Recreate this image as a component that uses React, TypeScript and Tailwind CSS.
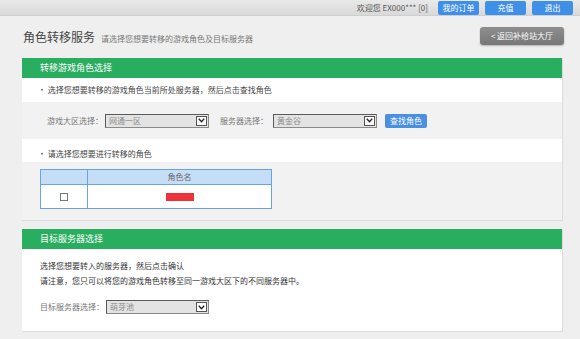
import React from "react";

const FONT = { fontFamily: '"Noto Sans CJK SC", "Noto Sans", sans-serif' };

const FakeSelect = ({ value, width }: { value: string; width: string }) => (
  <div className={`${width} h-[14px] flex items-stretch border border-[#8a8a8a] border-t-[#5a5a5a] border-l-[#5a5a5a] bg-[#e3e3e3]`}>
    <div className="flex-1 pl-[3px] text-[8px] leading-[12px] text-[#8c8c8c]">{value}</div>
    <div className="w-[11px] my-[1px] mr-[1px] bg-white border border-[#555] flex items-center justify-center">
      <svg width="7" height="5" viewBox="0 0 7 5">
        <path d="M0.8 0.8 L3.5 3.8 L6.2 0.8" fill="none" stroke="#222" strokeWidth="1.3" />
      </svg>
    </div>
  </div>
);

export default function App() {
  return (
    <div style={FONT} className="w-[580px] h-[339px] overflow-hidden bg-[#efefef]">
      {/* top bar */}
      <div className="h-[16px] bg-gradient-to-b from-[#e9e9e9] to-[#d9d9d9] border-b border-[#cfcfcf] flex items-start justify-end pr-[7px]">
        <span className="text-[8px] leading-[15px] text-[#555] mr-[10px]">欢迎您 EX000*** [0]</span>
        <div className="flex gap-[6px]">
          <button className="w-[41px] h-[14px] mt-[1px] rounded-[2px] bg-[#3f8fe8] text-white text-[8px] leading-[14px]">我的订单</button>
          <button className="w-[41px] h-[14px] mt-[1px] rounded-[2px] bg-[#3f8fe8] text-white text-[8px] leading-[14px]">充值</button>
          <button className="w-[41px] h-[14px] mt-[1px] rounded-[2px] bg-[#3f8fe8] text-white text-[8px] leading-[14px]">退出</button>
        </div>
      </div>

      {/* title row */}
      <div className="h-[42px] flex items-center justify-between pl-[23px] pr-[16px]">
        <div className="flex items-baseline gap-[6px]">
          <h1 className="text-[12px] text-[#444]">角色转移服务</h1>
          <span className="text-[8px] text-[#777]">请选择您想要转移的游戏角色及目标服务器</span>
        </div>
        <button className="w-[84px] h-[18px] -mt-[2px] rounded-[3px] bg-gradient-to-b from-[#8e8e8e] to-[#777] text-white text-[8px] leading-[18px] shadow-[0_1px_2px_rgba(0,0,0,0.25)]">
          &lt; 返回补给站大厅
        </button>
      </div>

      <div className="ml-[22px] w-[541px] flex flex-col gap-[8px]">
        {/* panel 1 */}
        <div className="border-r border-b border-[#dcdcdc] bg-white">
          <div className="h-[20px] bg-[#29ad5f] pl-[18px] text-white text-[9px] leading-[20px]">转移游戏角色选择</div>
          <div className="h-[24px] pl-[16px] text-[8px] leading-[24px] text-[#444]">· 选择您想要转移的游戏角色当前所处服务器，然后点击查找角色</div>
          <div className="h-[37px] bg-[#f2f2f2] flex items-center pl-[25px]">
            <span className="text-[8px] text-[#777] w-[58px]">游戏大区选择：</span>
            <FakeSelect value="网通一区" width="w-[104px]" />
            <span className="text-[8px] text-[#777] ml-[11px] w-[53px]">服务器选择：</span>
            <FakeSelect value="黄金谷" width="w-[104px]" />
            <button className="ml-[8px] w-[42px] h-[14px] rounded-[2px] bg-[#4a90e2] text-white text-[8px] leading-[14px]">查找角色</button>
          </div>
          <div className="h-[23px] pl-[16px] pt-[9px] text-[8px] leading-[12px] text-[#444]">· 请选择您想要进行转移的角色</div>
          <div className="bg-[#f2f2f2] pt-[7px] pb-[11px] pl-[18px]">
            <table className="w-[232px] border-collapse border border-[#6aa3e3]">
              <thead>
                <tr className="h-[15px] bg-[#c6ddf8]">
                  <th className="w-[47px] border border-[#6aa3e3]"></th>
                  <th className="border border-[#6aa3e3] text-[8px] font-normal text-[#666]">角色名</th>
                </tr>
              </thead>
              <tbody>
                <tr className="h-[24px] bg-white">
                  <td className="border border-[#6aa3e3]">
                    <div className="mx-auto w-[8px] h-[8px] border border-[#777] bg-white" />
                  </td>
                  <td className="border border-[#6aa3e3]">
                    <div className="mx-auto w-[28px] h-[8px] bg-[#ee3338]" />
                  </td>
                </tr>
              </tbody>
            </table>
          </div>
        </div>

        {/* panel 2 */}
        <div className="border-r border-b border-[#dcdcdc] bg-white h-[103px]">
          <div className="h-[20px] bg-[#29ad5f] pl-[18px] text-white text-[9px] leading-[20px]">目标服务器选择</div>
          <div className="pl-[18px] pt-[9px] text-[8px] leading-[15px] text-[#333]">
            <p>选择您想要转入的服务器，然后点击确认</p>
            <p>请注意，您只可以将您的游戏角色转移至同一游戏大区下的不同服务器中。</p>
          </div>
          <div className="flex items-center pl-[18px] mt-[12px]">
            <span className="text-[8px] text-[#777] w-[66px]">目标服务器选择：</span>
            <FakeSelect value="萌芽池" width="w-[103px]" />
          </div>
        </div>
      </div>
    </div>
  );
}
